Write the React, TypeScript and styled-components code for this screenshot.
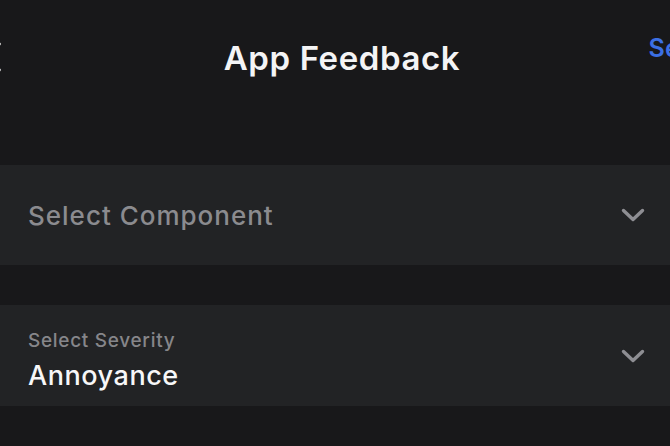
import { Fragment } from 'react';
import styled, { createGlobalStyle } from 'styled-components';

const GlobalStyle = createGlobalStyle`
  * {
    margin: 0;
    padding: 0;
    box-sizing: border-box;
  }

  body {
    background-color: #18181a;
    font-family: Inter, 'Liberation Sans', Arial, sans-serif;
    overflow: hidden;
  }
`;

// the screen is a little wider than the window, so both header actions get cut off
const Screen = styled.div`
  width: 728px;
  margin-left: -22px;
  min-height: 446px;
  background-color: #18181a;
`;

const Header = styled.header`
  height: 115px;
  display: grid;
  grid-template-columns: 1fr auto 1fr;
  align-items: center;
`;

const BackButton = styled.button`
  justify-self: start;
  display: flex;
  background: none;
  border: none;
  color: #ffffff;
  margin: -1px 0 0 6px;
`;

const Title = styled.h1`
  font-size: 33px;
  font-weight: 600;
  color: #f4f4f5;
  letter-spacing: 0.6px;
`;

const Action = styled.button`
  justify-self: end;
  background: none;
  border: none;
  font-family: inherit;
  font-size: 25px;
  font-weight: 600;
  color: #3c6fe3;
  letter-spacing: 0.4px;
  margin: 0 -6px 20px 0;
`;

const Picker = styled.div<{ $height: number; $gap: number }>`
  height: ${p => p.$height}px;
  margin-top: ${p => p.$gap}px;
  background-color: #222325;
  display: flex;
  align-items: center;
  justify-content: space-between;
  padding: 0 61px 0 50px;
`;

const Field = styled.div`
  display: flex;
  flex-direction: column;
  padding-top: 12px;
`;

const Placeholder = styled.span`
  font-size: 26px;
  font-weight: 500;
  color: #8b8b8f;
  letter-spacing: 1px;
`;

const Label = styled.span`
  font-size: 19px;
  font-weight: 500;
  color: #86868a;
  line-height: 24px;
  letter-spacing: 0.7px;
`;

const Value = styled.span`
  font-size: 27px;
  font-weight: 500;
  color: #f7f7f8;
  line-height: 38px;
  letter-spacing: 0.55px;
  margin-top: 4px;
`;

const Chevron = () => (
  <svg width="24" height="16" viewBox="0 0 24 16" fill="none">
    <path d="M2.5 3.5 L12 12.5 L21.5 3.5" stroke="#8e8e93" strokeWidth="3.4" strokeLinecap="round" strokeLinejoin="round" />
  </svg>
);

const BackIcon = () => (
  <svg width="18" height="32" viewBox="0 0 18 32" fill="none">
    <path d="M15 3 L3 16 L15 29" stroke="currentColor" strokeWidth="3.4" strokeLinecap="round" strokeLinejoin="round" />
  </svg>
);

function App() {
  return (
    <Fragment>
      <GlobalStyle />
      <Screen>
        <Header>
          <BackButton><BackIcon /></BackButton>
          <Title>App Feedback</Title>
          <Action>Send</Action>
        </Header>

        <Picker $height={100} $gap={50}>
          <Placeholder>Select Component</Placeholder>
          <Chevron />
        </Picker>

        <Picker $height={101} $gap={40}>
          <Field>
            <Label>Select Severity</Label>
            <Value>Annoyance</Value>
          </Field>
          <Chevron />
        </Picker>
      </Screen>
    </Fragment>
  );
}

export default App;
